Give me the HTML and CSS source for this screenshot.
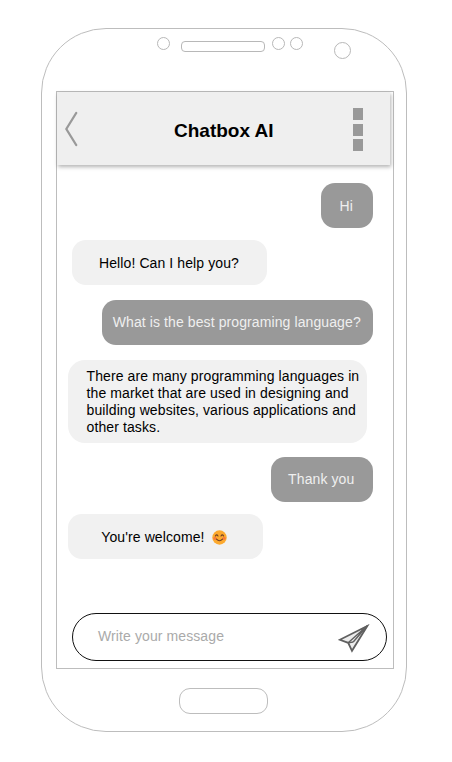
FILE: index.html
```html
<!DOCTYPE html>
<html lang="en">
<head>
<meta charset="utf-8">
<title>Chatbox AI</title>
<link rel="stylesheet" href="styles.css">
</head>
<body>
<div class="phone">
  <div class="bezel">
    <span class="sensor"></span>
    <span class="speaker"></span>
    <span class="sensor"></span>
    <span class="sensor second"></span>
    <span class="camera"></span>
  </div>
  <main class="screen">
    <header class="header">
      <svg class="back" width="14" height="36" viewBox="0 0 14 36"><path d="M11.2 2 1.3 18 11.2 34" fill="none" stroke="#999" stroke-width="2.3" stroke-linecap="round" stroke-linejoin="round"/></svg>
      <h1 class="title">Chatbox AI</h1>
      <div class="menu"><i></i><i></i><i></i></div>
    </header>
    <section class="chat">
      <p class="bubble sent hi">Hi</p>
      <p class="bubble received hello">Hello! Can I help you?</p>
      <p class="bubble sent question">What is the best programing language?</p>
      <p class="bubble received answer">There are many programming languages in<br>the market that are used in designing and<br>building websites, various applications and<br>other tasks.</p>
      <p class="bubble sent thanks">Thank you</p>
      <p class="bubble received welcome">You're welcome!
        <svg class="smile" width="15" height="15" viewBox="0 0 15 15"><circle cx="7.5" cy="7.5" r="7.2" fill="#fca92e"/><circle cx="3" cy="8.3" r="1.6" fill="#fa7a3c"/><circle cx="12" cy="8.3" r="1.6" fill="#fa7a3c"/><path d="M3.4 6Q4.7 3.7 6 6M9 6Q10.3 3.7 11.6 6M4.5 9.2Q7.5 12.4 10.5 9.2" fill="none" stroke="#704026" stroke-width="1.1" stroke-linecap="round"/></svg>
      </p>
    </section>
    <div class="composer">
      <span>Write your message</span>
      <svg class="send" width="32" height="29" viewBox="0 0 32 29"><path d="M29.3 2 1.8 15.8 10.2 18.8 14 26.8Z" fill="#ececec" stroke="#606060" stroke-width="1.8"/><path d="M29 2 10.2 18.8M29 2 15.2 18" fill="none" stroke="#606060" stroke-width="1.4"/><path d="M10.2 18.8 15.2 18" fill="none" stroke="#606060" stroke-width="1.3"/><path d="M30.5 .8 22.5 5 25.7 8.6Z" fill="#606060"/></svg>
    </div>
  </main>
  <div class="home"></div>
</div>
</body>
</html>
```
FILE: styles.css
```css
* { box-sizing: border-box; }
body {
  margin: 0;
  padding: 28px 0 0 41px;
  background: #fff;
  font: 14px/17px "Liberation Sans", Arial, sans-serif;
  letter-spacing: .1px;
  color: #000;
}
.phone {
  width: 366px;
  height: 704px;
  border: 1px solid #bdbdbd;
  border-radius: 65px;
  padding: 0 12px 0 14px;
}
.bezel {
  height: 62px;
  display: flex;
  align-items: flex-start;
  padding: 8px 0 0 101px;
}
.sensor, .camera, .speaker { border: 1px solid #b8b8b8; flex: none; }
.sensor { width: 13px; height: 13px; border-radius: 50%; }
.second { margin-left: 5px; }
.speaker {
  width: 84px;
  height: 11px;
  border-radius: 4px;
  margin: 4px 7px 0 11px;
}
.camera {
  width: 17px;
  height: 17px;
  border-radius: 50%;
  margin: 5px 0 0 31px;
}
.screen {
  width: 338px;
  height: 578px;
  border: 1px solid #bdbdbd;
  display: flex;
  flex-direction: column;
}
.header {
  width: 333px;
  height: 73px;
  flex: none;
  background: #efefef;
  box-shadow: 1px 2px 4px rgba(0, 0, 0, .3);
  display: flex;
  align-items: flex-start;
}
.back { margin: 19px 0 0 8px; }
.title {
  margin: 27px 0 0 95px;
  width: 100px;
  white-space: nowrap;
  font-size: 19px;
  line-height: 24px;
  font-weight: bold;
  letter-spacing: 0;
}
.menu {
  margin: 16px 0 0 79px;
  display: grid;
  gap: 3.5px;
}
.menu i { display: block; width: 10px; height: 12px; background: #999; }
.chat {
  display: flex;
  flex-direction: column;
  align-items: flex-start;
  padding: 18px 20px 0 11px;
}
.bubble {
  margin: 0;
  height: 45px;
  padding: 14px 0;
  border-radius: 14px;
  white-space: nowrap;
}
.sent { align-self: flex-end; padding-right: 1.5px; background: #999; color: #efefef; text-align: center; }
.received { background: #f1f1f1; }
.hi { width: 52px; padding-top: 15px; }
.hello { width: 195px; margin: 12px 0 0 4px; padding: 15px 0 0 27px; }
.question { width: 271px; margin-top: 15px; }
.answer { width: 299px; height: 83px; margin-top: 15px; padding: 8px 0 0 18.5px; border-radius: 17px; letter-spacing: .11px; }
.thanks { width: 102px; margin-top: 14px; }
.welcome { width: 195px; margin-top: 12px; padding: 15px 0 0 33.3px; }
.smile { vertical-align: -2.5px; margin-left: 3px; }
.composer {
  width: 315px;
  height: 48px;
  margin: 54px 0 0 15px;
  padding: 0 16px 1px 25px;
  border: 1.3px solid #111;
  border-radius: 25px;
  display: flex;
  align-items: center;
  justify-content: space-between;
  color: #aaa;
}
.send { margin-top: 4px; }
.home {
  width: 89px;
  height: 26px;
  margin: 19px 0 0 123px;
  border: 1px solid #bdbdbd;
  border-radius: 11px;
}
```
